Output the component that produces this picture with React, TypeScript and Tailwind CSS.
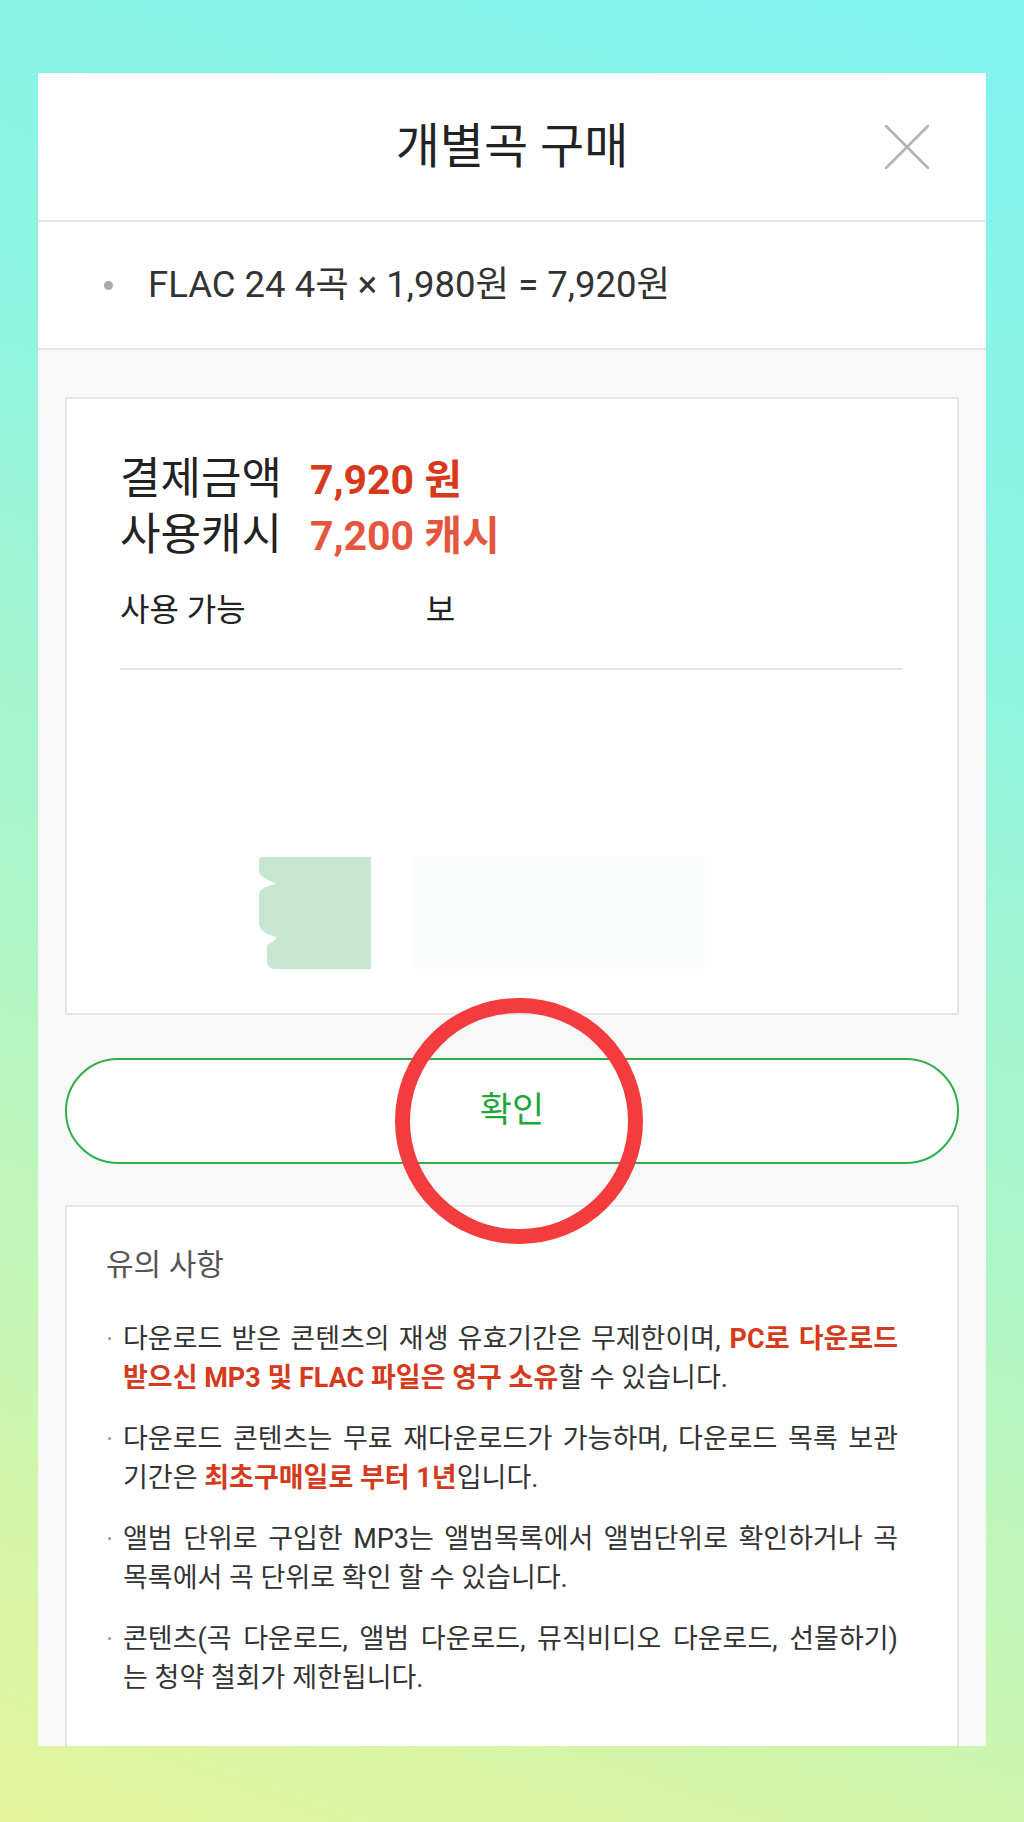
import React from "react";

const FONT = "font-['Roboto','Noto_Sans_CJK_KR',sans-serif]";

function CloseIcon() {
  return (
    <svg width="44" height="44" viewBox="0 0 44 44" fill="none">
      <path
        d="M1 1L43 43M43 1L1 43"
        stroke="#b3b3b3"
        strokeWidth="2.5"
        strokeLinecap="round"
      />
    </svg>
  );
}

function BlurredArt() {
  return (
    <svg width="446" height="112" viewBox="0 0 446 112" fill="none">
      <rect x="112" y="0" width="334" height="112" fill="#fafdfb" />
      <path
        d="M0 4Q0 0 4 0H112V112H16Q8 112 8 104V88Q16 84 18 80Q0 76 0 66V38Q0 30 18 27Q4 22 0 16Z"
        fill="#c6e6d0"
      />
      <rect x="112" y="0" width="40" height="112" fill="#ffffff" />
    </svg>
  );
}

type Part = { text: string; red?: boolean };

function Notice({ first, second }: { first: Part[]; second: Part[] }) {
  const render = (parts: Part[]) =>
    parts.map((p, i) =>
      p.red ? (
        <span key={i} className="font-bold text-[#d63a1c]">
          {p.text}
        </span>
      ) : (
        <span key={i}>{p.text}</span>
      )
    );
  return (
    <div className="flex">
      <span className="w-[17px] shrink-0 text-[#999]">·</span>
      <div className="w-[775px]">
        <span className="block whitespace-nowrap text-justify [text-align-last:justify]">
          {render(first)}
        </span>
        <span className="block whitespace-nowrap">{render(second)}</span>
      </div>
    </div>
  );
}

export default function App() {
  return (
    <div
      className={`min-h-[1822px] w-full bg-[linear-gradient(200deg,#7ff4f0_0%,#8ff5e0_30%,#b6f5c0_65%,#e6f59a_100%)] px-[38px] pt-[73px] ${FONT}`}
    >
      <div className="relative h-[1673px] overflow-hidden bg-[#f8f8f8]">
        {/* Header */}
        <div className="relative flex h-[149px] items-center justify-center border-b-2 border-[#e6e6e6] bg-white">
          <h1 className="text-[48px] leading-none text-[#222]">개별곡 구매</h1>
          <button className="absolute right-[57px] top-1/2 -translate-y-1/2">
            <CloseIcon />
          </button>
        </div>

        {/* Item line */}
        <div className="flex h-[128px] items-center border-b-2 border-[#e6e6e6] bg-white pl-[66px]">
          <span className="h-[9px] w-[9px] rounded-full bg-[#aaaaaa]" />
          <span className="ml-[35px] text-[36.5px] text-[#333]">
            FLAC 24 4곡 × 1,980원 = 7,920원
          </span>
        </div>

        {/* Body */}
        <div className="px-[27px] pt-[47px]">
          <div className="h-[618px] border-2 border-[#e6e6e6] bg-white px-[53px] pt-[53px]">
            <div className="flex items-baseline leading-[55px] text-[#222]">
              <span className="text-[44px]">결제금액</span>
              <span className="ml-[28px] text-[41px] font-bold text-[#d8391b]">7,920 원</span>
            </div>
            <div className="flex items-baseline leading-[55px] text-[#222]">
              <span className="text-[44px]">사용캐시</span>
              <span className="ml-[28px] text-[41px] font-bold text-[#e5563e]">7,200 캐시</span>
            </div>
            <div className="mt-[26px] flex text-[32px] leading-[40px] text-[#222]">
              <span>사용 가능</span>
              <span className="ml-[180px]">보</span>
            </div>
            <div className="mt-[38px] h-[2px] w-[783px] bg-[#e3e3e3]" />
            <div className="ml-[139px] mt-[187px]">
              <BlurredArt />
            </div>
          </div>

          <button className="mt-[43px] flex h-[106px] w-full items-center justify-center rounded-full border-2 border-[#2eae4b] bg-white text-[35px] text-[#1fa73c]">
            확인
          </button>

          <div className="mt-[41px] h-[700px] border-2 border-b-0 border-[#e6e6e6] bg-white pl-[39px] pt-[38px]">
            <div className="text-[30px] leading-[40px] text-[#555]">유의 사항</div>
            <div className="mt-[35px] flex flex-col gap-[22px] text-[27px] leading-[39px] text-[#333]">
              <Notice
                first={[
                  { text: "다운로드 받은 콘텐츠의 재생 유효기간은 무제한이며, " },
                  { text: "PC로 다운로드", red: true },
                ]}
                second={[
                  { text: "받으신 MP3 및 FLAC 파일은 영구 소유", red: true },
                  { text: "할 수 있습니다." },
                ]}
              />
              <Notice
                first={[
                  { text: "다운로드 콘텐츠는 무료 재다운로드가 가능하며, 다운로드 목록 보관" },
                ]}
                second={[
                  { text: "기간은 " },
                  { text: "최초구매일로 부터 1년", red: true },
                  { text: "입니다." },
                ]}
              />
              <Notice
                first={[
                  { text: "앨범 단위로 구입한 MP3는 앨범목록에서 앨범단위로 확인하거나 곡" },
                ]}
                second={[{ text: "목록에서 곡 단위로 확인 할 수 있습니다." }]}
              />
              <Notice
                first={[
                  { text: "콘텐츠(곡 다운로드, 앨범 다운로드, 뮤직비디오 다운로드, 선물하기)" },
                ]}
                second={[{ text: "는 청약 철회가 제한됩니다." }]}
              />
            </div>
          </div>
        </div>

        {/* Annotation circle */}
        <div className="pointer-events-none absolute left-[357px] top-[925px] h-[246px] w-[248px] rounded-full border-[15px] border-[#f43b3d]" />
      </div>
    </div>
  );
}
